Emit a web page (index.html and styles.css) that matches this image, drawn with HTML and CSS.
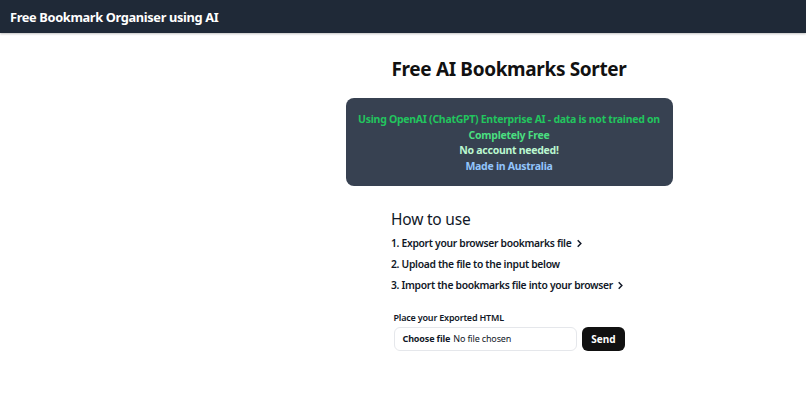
FILE: index.html
```html
<!DOCTYPE html>
<html lang="en">
<head>
    <meta charset="UTF-8">
    <meta name="viewport" content="width=device-width, initial-scale=1.0">
    <title>Free Bookmark Organiser using AI</title>
    <link rel="stylesheet" href="styles.css">
</head>
<body>

<nav class="topbar">
    <div class="brand">Free Bookmark Organiser using AI</div>
</nav>

<div class="layout">
    <aside class="side"></aside>

    <main class="main">
        <h1>Free AI Bookmarks Sorter</h1>

        <div class="info">
            <div class="info-green">Using OpenAI (ChatGPT) Enterprise AI - data is not trained on</div>
            <div class="info-free">Completely Free</div>
            <div class="info-account">No account needed!</div>
            <div class="info-made">Made in Australia</div>
        </div>

        <div class="steps">
            <h2>How to use</h2>
            <ol class="step-list">
                <li>1. Export your browser bookmarks file <svg class="chev" viewBox="0 0 10 10"><path d="M3 1.5 6.5 5 3 8.5"/></svg></li>
                <li>2. Upload the file to the input below</li>
                <li>3. Import the bookmarks file into your browser <svg class="chev" viewBox="0 0 10 10"><path d="M3 1.5 6.5 5 3 8.5"/></svg></li>
            </ol>
        </div>

        <form class="upload">
            <label class="upload-label">Place your Exported HTML</label>
            <div class="upload-row">
                <div class="file-box">
                    <span class="file-btn">Choose file</span>
                    <span class="file-name">No file chosen</span>
                </div>
                <button type="button" class="send">Send</button>
            </div>
        </form>
    </main>
</div>

</body>
</html>
```

FILE: styles.css
```css
body {
    margin: 0;
    font-family: "Noto Sans", "Open Sans", sans-serif;
    background-color: #ffffff;
    color: #111827;
}

.topbar {
    height: 33px;
    background-color: #1f2937;
    display: flex;
    align-items: center;
    padding: 0 10px;
    box-shadow: 0 1px 2px rgba(0, 0, 0, 0.25);
}

.brand {
    color: #ffffff;
    font-size: 12.8px;
    font-weight: 700;
    letter-spacing: -0.35px;
}

.layout {
    display: grid;
    grid-template-columns: 212px 1fr;
}

.main {
    display: flex;
    flex-direction: column;
    align-items: center;
}

h1 {
    margin: 23px 0 0;
    font-size: 19px;
    font-weight: 700;
    color: #111111;
    letter-spacing: -0.35px;
}

.info {
    width: 327px;
    box-sizing: border-box;
    margin-top: 16px;
    padding: 14px 8px 12px;
    background-color: #374151;
    border-radius: 8px;
    text-align: center;
    font-size: 10.5px;
    font-weight: 700;
    line-height: 15.6px;
    letter-spacing: -0.28px;
}

.info-green { color: #22c55e; }
.info-free { color: #4ade80; }
.info-account { color: #bbf7d0; }
.info-made { color: #93c5fd; }

.steps {
    width: 236px;
    margin-top: 22px;
}

h2 {
    margin: 0;
    font-size: 15.5px;
    font-weight: 400;
    color: #111827;
    letter-spacing: -0.2px;
}

.step-list {
    list-style: none;
    padding: 0;
    margin: 3px 0 0;
    font-size: 10.3px;
    font-weight: 600;
    letter-spacing: -0.3px;
    white-space: nowrap;
}

.step-list li {
    height: 20.8px;
    line-height: 20.8px;
}

.chev {
    width: 9px;
    height: 9px;
    margin-left: 1px;
    vertical-align: -1px;
    fill: none;
    stroke: #111827;
    stroke-width: 1.6;
}

.upload {
    width: 231px;
    margin-top: 15px;
}

.upload-label {
    display: block;
    font-size: 9px;
    font-weight: 600;
    letter-spacing: -0.2px;
    margin-bottom: 3px;
}

.upload-row {
    display: flex;
    align-items: center;
    gap: 5px;
}

.file-box {
    flex: 1;
    height: 22px;
    display: flex;
    align-items: center;
    padding: 0 8px;
    border: 1px solid #e5e7eb;
    border-radius: 6px;
    font-size: 9px;
    letter-spacing: -0.15px;
}

.file-btn {
    font-weight: 700;
    margin-right: 3px;
}

.send {
    height: 24px;
    padding: 0 9px;
    border: none;
    border-radius: 6px;
    background-color: #111111;
    color: #ffffff;
    font-family: inherit;
    font-size: 10px;
    font-weight: 700;
}
```
